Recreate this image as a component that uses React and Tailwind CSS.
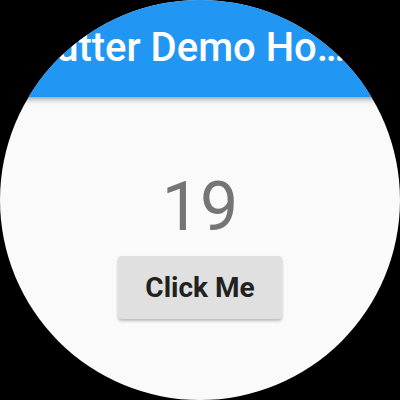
import React, { useState } from 'react';

const App = () => {
  const [count, setCount] = useState(19);

  return (
    <div className="w-[400px] h-[400px] bg-black font-['Roboto',sans-serif]">
      {/* round watch face */}
      <div className="w-[400px] h-[400px] rounded-full overflow-hidden bg-[#fafafa] flex flex-col">
        {/* app bar */}
        <div className="relative z-10 h-[97px] shrink-0 bg-[#2196f3] shadow-[0_2px_4px_rgba(0,0,0,0.25),0_4px_6px_rgba(0,0,0,0.12)] pt-[28px] pl-[24px] pr-[50px]">
          <h1 className="text-white text-[40px] leading-[40px] font-medium whitespace-nowrap overflow-hidden text-ellipsis">
            Flutter Demo Home Page
          </h1>
        </div>

        {/* body */}
        <div className="flex flex-col items-center pt-[76px]">
          <p className="text-[#757575] text-[68px] leading-[68px]">{count}</p>
          <button
            onClick={() => setCount(count + 1)}
            className="mt-[15px] w-[164px] h-[63px] bg-[#e0e0e0] rounded-[4px] shadow-[0_2px_3px_rgba(0,0,0,0.25)] text-[#212121] text-[28px] leading-[28px] font-bold pt-[1px]"
          >
            Click Me
          </button>
        </div>
      </div>
    </div>
  );
};

export default App;
